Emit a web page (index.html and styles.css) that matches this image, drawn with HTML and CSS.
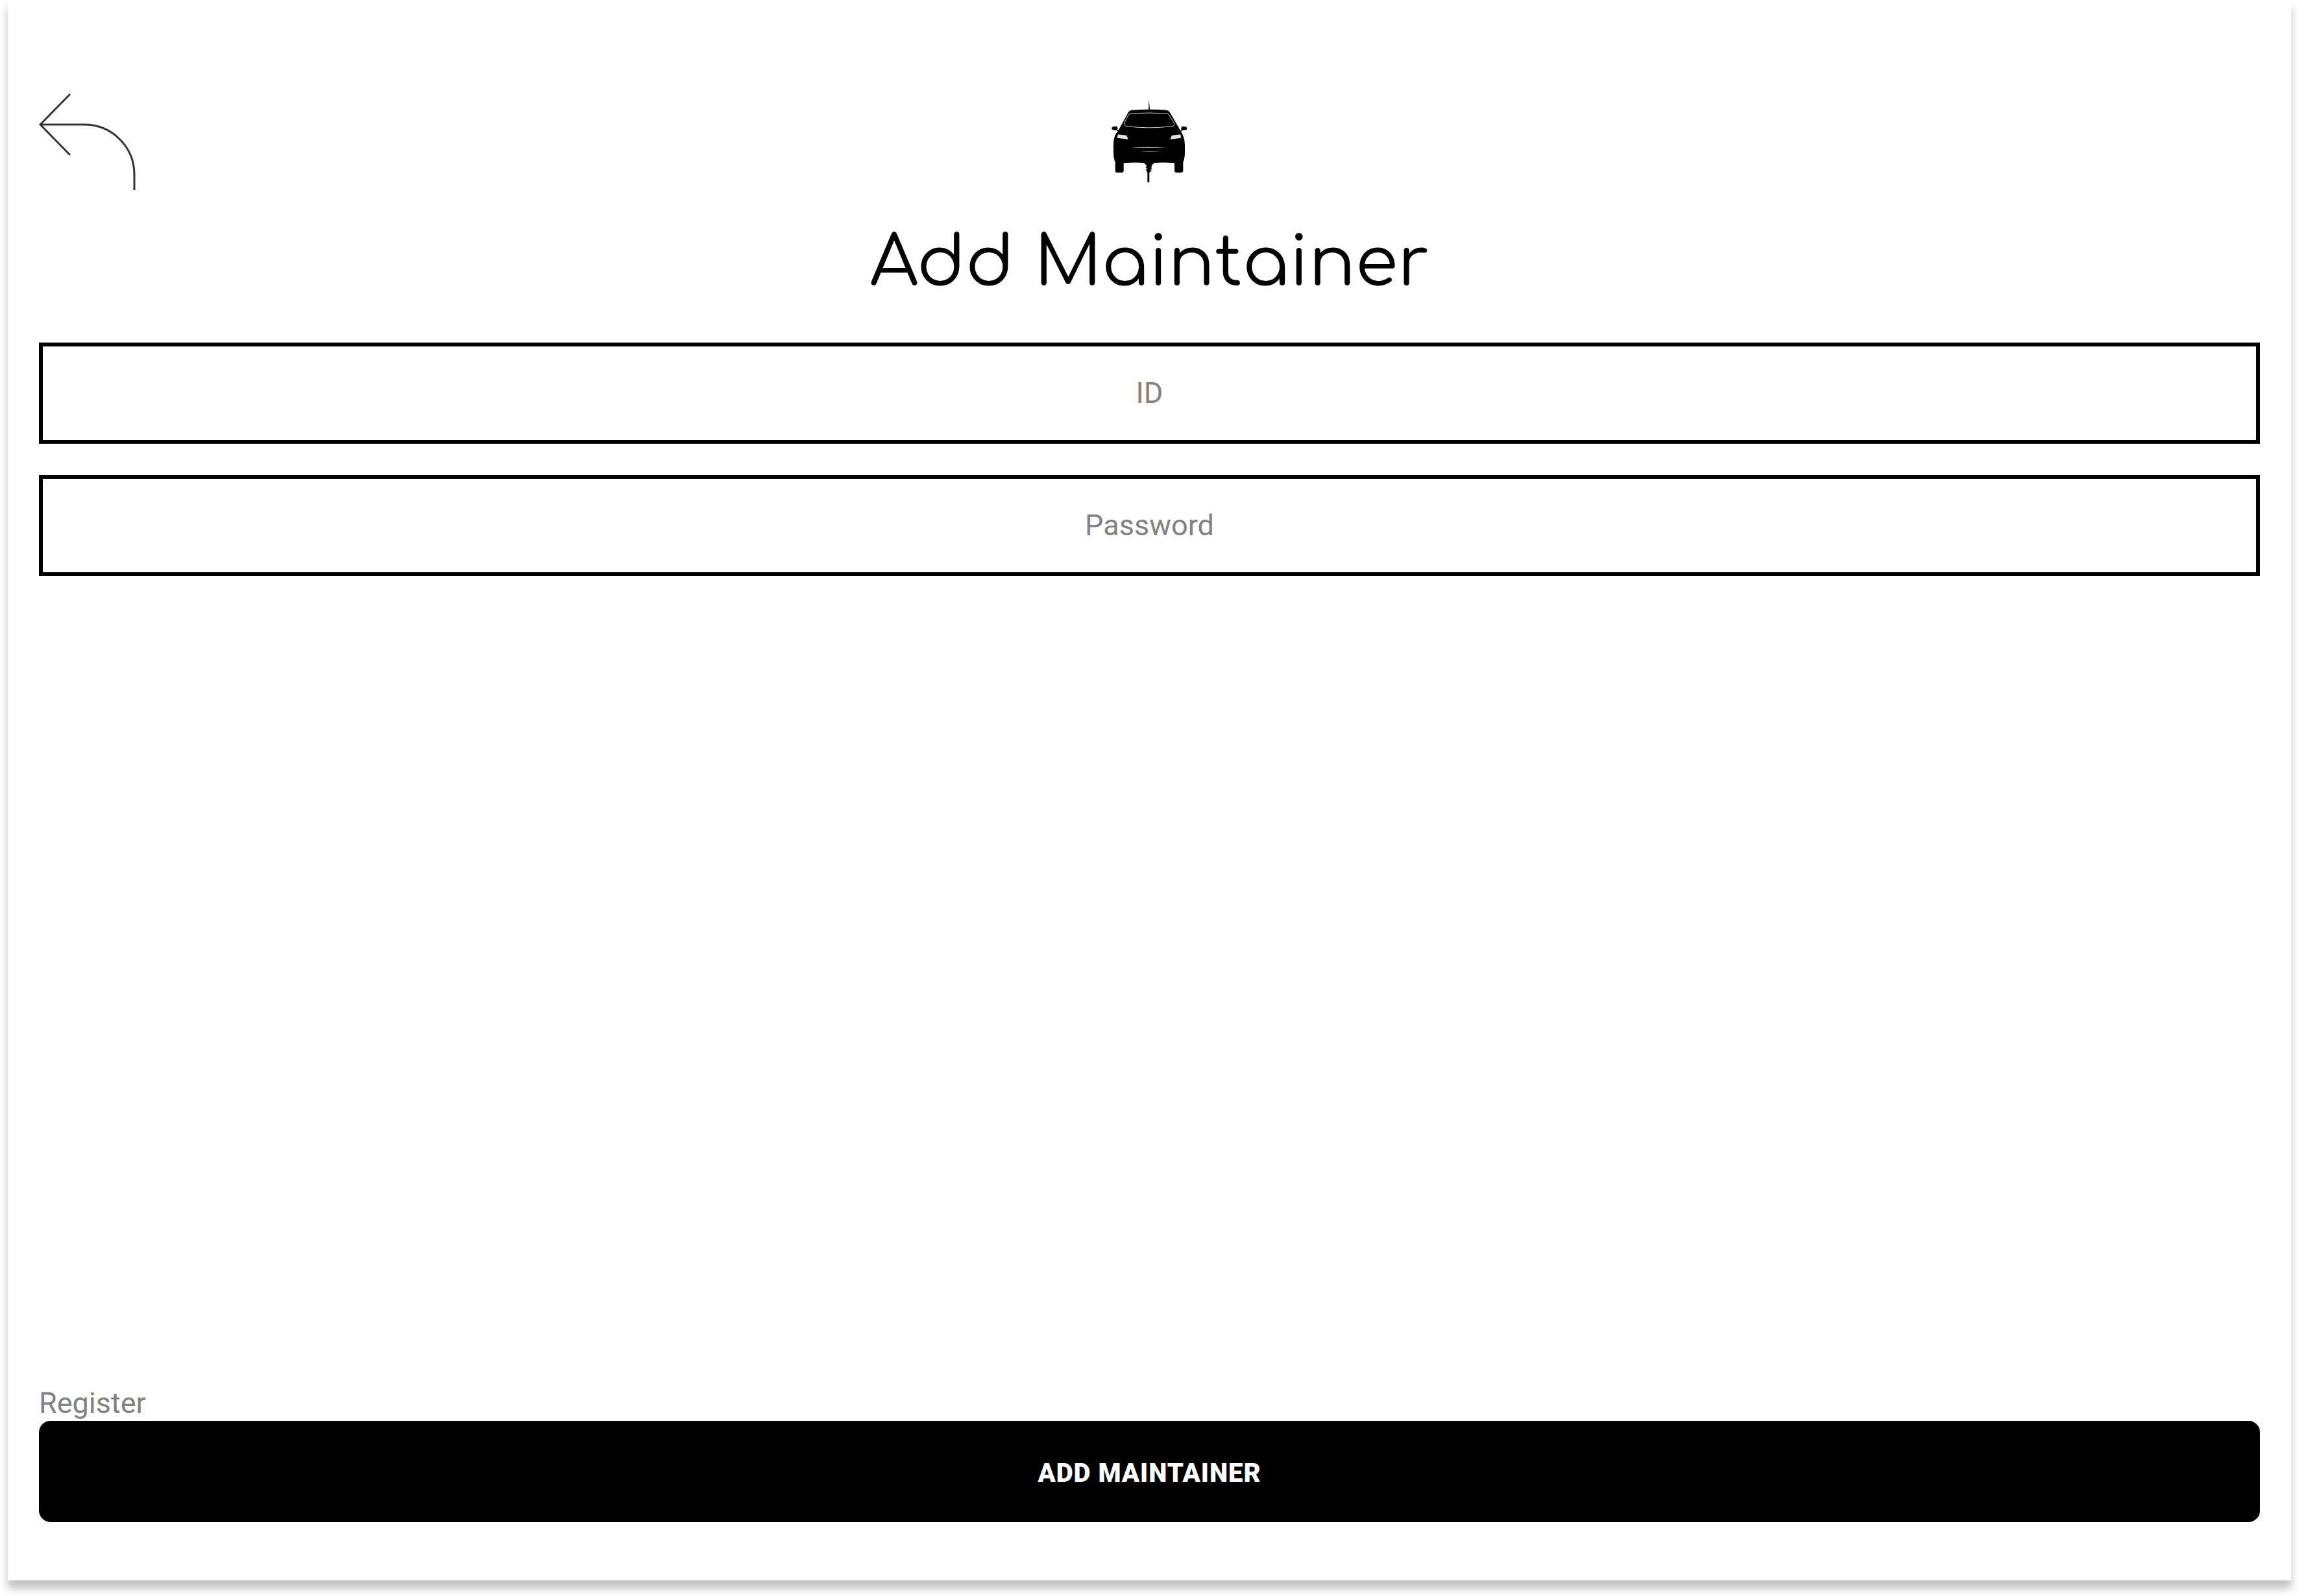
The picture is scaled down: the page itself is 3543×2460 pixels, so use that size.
FILE: index.html
```html
<!DOCTYPE html>
<html lang="en">
<head>
<meta charset="utf-8">
<meta name="viewport" content="width=device-width, initial-scale=1">
<title>Add Maintainer</title>
<link rel="stylesheet" href="styles.css">
</head>
<body>
<main class="panel">
  <header class="header">
    <button class="back" type="button" aria-label="Back">
      <svg class="icon" viewBox="0 0 156 156" aria-hidden="true">
        <path d="M48 5 2 52l46 47M2 52h68c43 0 77 35 77 77v24" fill="none" stroke="#333" stroke-width="3"/>
      </svg>
    </button>
    <svg class="logo" viewBox="5 0 480 468" aria-hidden="true">
      <path d="M239 88 241 38l4 50z"/>
      <path d="M161 89Q240 83 322 89Q332 90 337 98L386 183L391 182Q387 166 397 164L411 166Q417 168 417 176Q416 181 408 181L396 183L389 188Q397 199 402 217Q408 235 407 275Q408 310 399 330V369Q399 378 389 378H369Q359 378 359 369V334Q310 330 266 333L253 346L254 353L249 357L251 363L247 368L249 374L243 377V423H234V377L229 372L234 368L228 362L233 357L227 351L231 347L218 333Q170 330 124 334V369Q124 378 114 378H94Q85 378 85 369V330Q76 310 77 275Q75 235 82 213Q86 199 97 187L90 182L75 181Q68 179 69 172Q70 166 78 165L92 164Q98 170 95 181L101 181L146 98Q151 90 161 89Z"/>
      <path d="M158 105Q240 99 325 105Q331 107 335 114L357 148Q361 161 348 164Q240 177 137 164Q124 159 128 147L144 115Q149 106 158 105Z" fill="none" stroke="#ccc" stroke-width="3"/>
      <path d="M97 202 138 206 145 224 94 218zM387 202 347 206 339 224 389 218z" fill="#e2e2e2"/>
      <path d="M157 262Q240 259 321 262Q240 265 157 262Z" fill="#ddd"/>
      <path d="M196 280Q240 278 296 280Q240 282 196 280Z" fill="#999"/>
      <path d="M226 355 255 359M226 366 255 370" fill="none" stroke="#000" stroke-width="3"/>
    </svg>
  </header>
  <h1 class="title">Add Maintainer</h1>
  <form class="form">
    <input class="field" type="text" placeholder="ID" aria-label="ID">
    <input class="field" type="password" placeholder="Password" aria-label="Password">
    <div class="actions">
      <label class="caption" for="submit">Register</label>
      <button class="submit" id="submit" type="submit">ADD MAINTAINER</button>
    </div>
  </form>
</main>
</body>
</html>
```
FILE: styles.css
```css
* {
  box-sizing: border-box;
}

body {
  margin: 0;
  background: #fff;
  font-family: Roboto, "Liberation Sans", sans-serif;
}

.panel {
  display: flex;
  flex-direction: column;
  min-height: calc(100vh - 24px);
  margin: 0 12px 24px;
  padding: 140px 48px 90px;
  background: #fff;
  box-shadow: 0 12px 12px rgba(0, 0, 0, 0.25);
}

.header {
  display: grid;
  grid-template-columns: 1fr auto 1fr;
}

.back {
  justify-self: start;
  padding: 0;
  border: 0;
  background: none;
  cursor: pointer;
}

.icon {
  display: block;
  width: 156px;
  height: 156px;
}

.logo {
  width: 160px;
  height: 156px;
}

.title {
  margin: 38px 0 50px;
  font-family: Comfortaa, Lato, sans-serif;
  font-size: 106px;
  font-weight: 400;
  line-height: 144px;
  text-align: center;
}

.form {
  display: flex;
  flex: 1;
  flex-direction: column;
  gap: 48px;
}

.field {
  width: 100%;
  height: 156px;
  padding: 0 48px 2px;
  border: 6px solid #000;
  border-radius: 0;
  background: #fff;
  font: inherit;
  font-size: 45px;
  text-align: center;
}

.field::placeholder {
  color: #828282;
  opacity: 1;
}

.actions {
  display: flex;
  flex-direction: column;
  margin-top: auto;
}

.caption {
  color: #828282;
  font-size: 45px;
  line-height: 54px;
}

.submit {
  height: 156px;
  padding: 4px 48px 0;
  border: 0;
  border-radius: 18px;
  background: #000;
  color: #fff;
  font: inherit;
  font-size: 40px;
  font-weight: 900;
  letter-spacing: 1px;
  cursor: pointer;
}
```
